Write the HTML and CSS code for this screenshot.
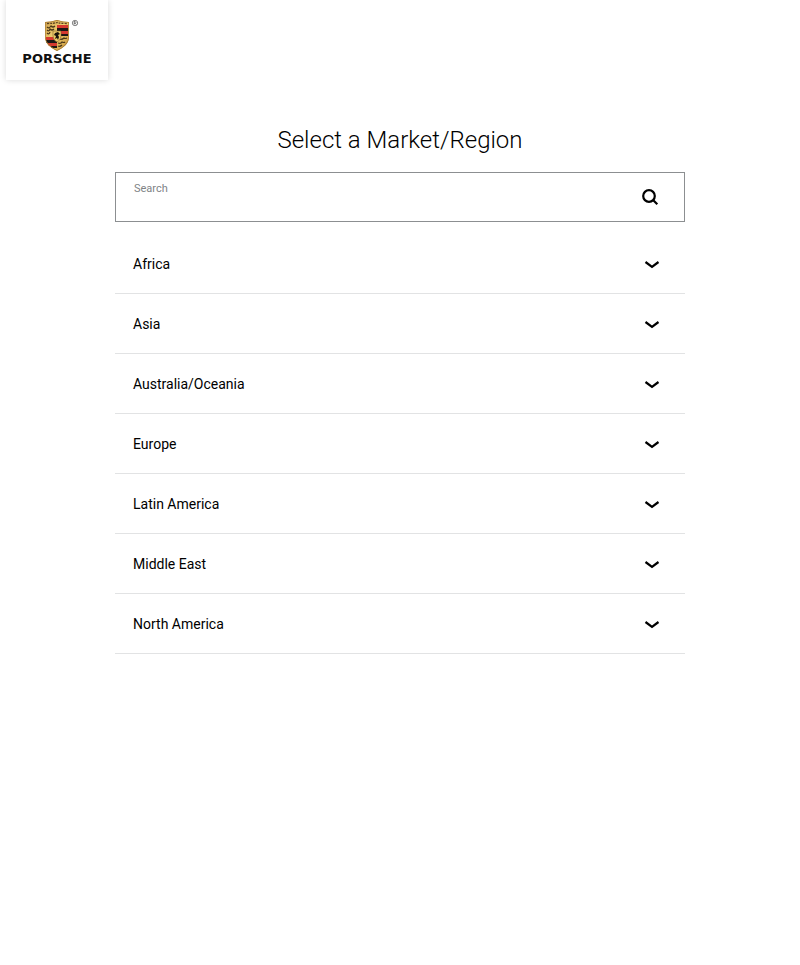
FILE: index.html
```html
<!DOCTYPE html>
<html lang="en">
<head>
<meta charset="utf-8">
<meta name="viewport" content="width=device-width, initial-scale=1">
<title>Select a Market/Region</title>
<link rel="stylesheet" href="styles.css">
</head>
<body>
<header class="header">
  <a class="brand" href="#">
    <svg class="crest" viewBox="0 0 36 34" aria-hidden="true">
      <defs>
        <clipPath id="shield"><path d="M1 2Q7 2 13 0Q19 2 25 2V17C25 24 19 28 13 31C7 28 1 24 1 17Z"/></clipPath>
        <linearGradient id="gold" x1="0" x2="1" y1="0" y2="1"><stop offset="0" stop-color="#c99a4a"/><stop offset=".45" stop-color="#f0cf70"/><stop offset="1" stop-color="#c08a30"/></linearGradient>
      </defs>
      <g transform="translate(0 1)">
        <g clip-path="url(#shield)">
          <path fill="url(#gold)" d="M0 0h26v32H0z"/>
          <path fill="#d5392f" d="M13 5h11v3H13zM15 11h9v3h-9zM2 17h9v3H2zM4 23h9v3H4z"/>
          <path fill="#1c1714" d="M13 8h11v3H13zM16 14h8v2h-8zM2 20h11v3H2zM7 26h6v2H7z"/>
          <path fill="none" stroke="#4a3718" stroke-width="1.200" d="M3 7q2 2 4-1q2 2 4 0M3 10q2 2 3-1q2 2 4 0M3 13q2 2 3-1M15 19q3 1 5-1q1 1 3 0M14 23q3 1 4-1q2 1 3 0M14 26q2 1 4-1"/>
          <path fill="none" stroke="#5b4220" stroke-width="1.300" stroke-dasharray="2 1" d="M3 3.500q7 0 10-1q4 1 10 1"/>
          <path fill="#efcb68" stroke="#806029" stroke-width=".6" d="M9 11h8v5q0 4-4 6q-4-2-4-6z"/>
          <path fill="#18130d" d="M11 13l3-1l2 2l-2 1l1 2l-1 3l-1-2l-2 1l1-3l-2-1z"/>
          <path fill="none" stroke="#a87d35" stroke-width="1.400" d="M1 2Q7 2 13 0Q19 2 25 2V17C25 24 19 28 13 31C7 28 1 24 1 17Z"/>
        </g>
      </g>
      <circle cx="31" cy="4" r="2.700" fill="none" stroke="#555" stroke-width=".7"/>
      <path fill="none" stroke="#444" stroke-width=".7" d="M30.200 5.500v-3h1q1.600.9 0 1.700h-1m1 0l1 1.300"/>
    </svg>
    <span class="wordmark">PORSCHE</span>
  </a>
</header>
<main class="picker">
  <h1 class="title">Select a Market/Region</h1>
  <form class="search" role="search">
    <div class="field">
      <label class="label" for="search">Search</label>
      <input class="input" id="search" type="text" autocomplete="off">
    </div>
    <button class="submit" type="button" aria-label="Submit search">
      <svg class="icon" viewBox="0 0 18 18" aria-hidden="true"><circle cx="8" cy="8" r="5.800"/><path d="M12 12l4.300 4.300"/></svg>
    </button>
  </form>
  <ul class="regions">
    <li><button class="region" type="button" aria-expanded="false">Africa<svg class="chevron" viewBox="0 0 16 12" aria-hidden="true"><path d="M1.500 4L8 8.800L14.500 4"/></svg></button></li>
    <li><button class="region" type="button" aria-expanded="false">Asia<svg class="chevron" viewBox="0 0 16 12" aria-hidden="true"><path d="M1.500 4L8 8.800L14.500 4"/></svg></button></li>
    <li><button class="region" type="button" aria-expanded="false">Australia/Oceania<svg class="chevron" viewBox="0 0 16 12" aria-hidden="true"><path d="M1.500 4L8 8.800L14.500 4"/></svg></button></li>
    <li><button class="region" type="button" aria-expanded="false">Europe<svg class="chevron" viewBox="0 0 16 12" aria-hidden="true"><path d="M1.500 4L8 8.800L14.500 4"/></svg></button></li>
    <li><button class="region" type="button" aria-expanded="false">Latin America<svg class="chevron" viewBox="0 0 16 12" aria-hidden="true"><path d="M1.500 4L8 8.800L14.500 4"/></svg></button></li>
    <li><button class="region" type="button" aria-expanded="false">Middle East<svg class="chevron" viewBox="0 0 16 12" aria-hidden="true"><path d="M1.500 4L8 8.800L14.500 4"/></svg></button></li>
    <li><button class="region" type="button" aria-expanded="false">North America<svg class="chevron" viewBox="0 0 16 12" aria-hidden="true"><path d="M1.500 4L8 8.800L14.500 4"/></svg></button></li>
  </ul>
</main>
</body>
</html>
```
FILE: styles.css
```css
* {
  box-sizing: border-box;
}

body {
  margin: 0;
  background: #fff;
  color: #000;
  font-family: Roboto, "Liberation Sans", sans-serif;
}

.header {
  display: flex;
  padding: 0 6px;
}

.brand {
  display: flex;
  flex-direction: column;
  align-items: center;
  padding: 19px 10px 16px;
  min-width: 102px;
  background: #fff;
  box-shadow: 0 0 6px rgba(0, 0, 0, 0.15);
  color: #111;
  text-decoration: none;
}

.crest {
  width: 36px;
  height: 34px;
  margin-left: 10px;
}

.wordmark {
  font: bold 13px/11px "DejaVu Sans", sans-serif;
}

.picker {
  max-width: 602px;
  margin: 0 auto;
  padding: 44px 16px;
}

.title {
  margin: 0 0 16px;
  font-size: 24px;
  font-weight: 300;
  line-height: 32px;
  text-align: center;
}

.search {
  display: flex;
  height: 50px;
  border: 1px solid #8c8f91;
}

.field {
  flex: 1;
  display: flex;
  flex-direction: column;
  padding: 9px 0 4px 18px;
}

.label {
  color: #808386;
  font-size: 11px;
  line-height: 14px;
}

.input {
  width: 100%;
  min-height: 0;
  flex: 1;
  padding: 0;
  border: 0;
  outline: 0;
  background: none;
  font: inherit;
}

.submit {
  display: flex;
  align-items: center;
  padding: 0 25px;
  border: 0;
  background: none;
}

.icon {
  width: 18px;
  height: 18px;
  fill: none;
  stroke: #000;
  stroke-width: 2.2;
}

.regions {
  margin: 12px 0 0;
  padding: 0;
  list-style: none;
}

.region {
  display: flex;
  align-items: center;
  justify-content: space-between;
  width: 100%;
  height: 60px;
  padding: 0 25px 0 18px;
  border: 0;
  border-bottom: 1px solid #e2e3e4;
  background: none;
  color: #000;
  font-family: inherit;
  font-size: 14px;
  line-height: 20px;
  text-align: left;
}

.chevron {
  width: 16px;
  height: 12px;
  fill: none;
  stroke: #000;
  stroke-width: 2.2;
}
```
